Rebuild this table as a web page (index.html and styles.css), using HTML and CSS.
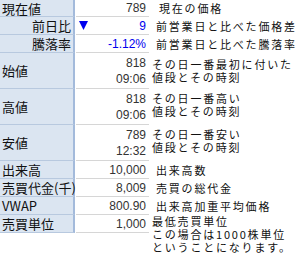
FILE: index.html
```html
<!DOCTYPE html>
<html lang="ja">
<head>
<meta charset="utf-8">
<link rel="stylesheet" href="styles.css">
</head>
<body>
<div class="board">
  <div class="lbl">現在値</div>
  <div class="val">789</div>
  <div class="desc d-ind2">現在の価格</div>

  <div class="lbl right">前日比</div>
  <div class="val blue split"><svg class="tri" width="9" height="9" viewBox="0 0 9 9"><polygon points="0,0 9,0 4.5,9" fill="#0000ee"/></svg><span>9</span></div>
  <div class="desc d-ind1">前営業日と比べた価格差</div>

  <div class="lbl right">騰落率</div>
  <div class="val blue">-1.12%</div>
  <div class="desc d-ind1">前営業日と比べた騰落率</div>

  <div class="lbl">始値</div>
  <div class="val two"><span>818</span><span>09:06</span></div>
  <div class="desc">その日一番最初に付いた<br>値段とその時刻</div>

  <div class="lbl">高値</div>
  <div class="val two"><span>818</span><span>09:06</span></div>
  <div class="desc up">その日一番高い<br>値段とその時刻</div>

  <div class="lbl">安値</div>
  <div class="val two"><span>789</span><span>12:32</span></div>
  <div class="desc up">その日一番安い<br>値段とその時刻</div>

  <div class="lbl">出来高</div>
  <div class="val">10,000</div>
  <div class="desc d-ind1">出来高数</div>

  <div class="lbl">売買代金(千)</div>
  <div class="val">8,009</div>
  <div class="desc d-ind1">売買の総代金</div>

  <div class="lbl">VWAP</div>
  <div class="val">800.90</div>
  <div class="desc d-ind1">出来高加重平均価格</div>

  <div class="lbl">売買単位</div>
  <div class="val">1,000</div>
  <div class="desc top">最低売買単位<br>この場合は1000株単位<br>ということになります。</div>
</div>
</body>
</html>
```

FILE: styles.css
```css
html, body {
  margin: 0;
  padding: 0;
  background: #ffffff;
}
body {
  font-family: "Liberation Sans", "Noto Sans CJK JP", sans-serif;
  width: 305px;
  height: 254px;
  overflow: hidden;
}
.board {
  display: grid;
  grid-template-columns: 75px 74px 1fr;
  grid-template-rows: 17px 18px 18px 36px 36px 36px 18px 18px 18px 18px;
}
.lbl {
  box-sizing: border-box;
  background: #dbe5f1;
  border-right: 2px solid #a3badb;
  border-bottom: 1px solid #b8c9df;
  font-family: "Noto Sans CJK JP", sans-serif;
  font-size: 13px;
  line-height: 13px;
  color: #111;
  padding: 0 2px 0 2px;
  display: flex;
  align-items: center;
  white-space: nowrap;
}
.lbl.right {
  justify-content: flex-end;
}
.val {
  box-sizing: border-box;
  border-bottom: 1px solid #d6d6d6;
  margin-left: 1px;
  font-size: 12px;
  color: #333;
  padding-right: 3px;
  display: flex;
  align-items: center;
  justify-content: flex-end;
}
.val.blue {
  color: #0000ee;
}
.val.split {
  justify-content: space-between;
  padding-left: 3px;
}
.tri {
  display: block;
}
.val.two {
  flex-direction: column;
  align-items: flex-end;
  justify-content: center;
  line-height: 16px;
}
.desc {
  font-family: "Noto Sans CJK JP", sans-serif;
  font-size: 11px;
  line-height: 13px;
  color: #111;
  white-space: nowrap;
  padding-left: 3px;
  display: flex;
  align-items: center;
  letter-spacing: 1.8px;
}
.desc.d-ind1 {
  padding-left: 7px;
}
.desc.d-ind2 {
  padding-left: 10px;
}
.desc.up {
  align-items: flex-start;
  padding-top: 3px;
}
.desc.top {
  align-items: flex-start;
  padding-top: 0;
}
```
